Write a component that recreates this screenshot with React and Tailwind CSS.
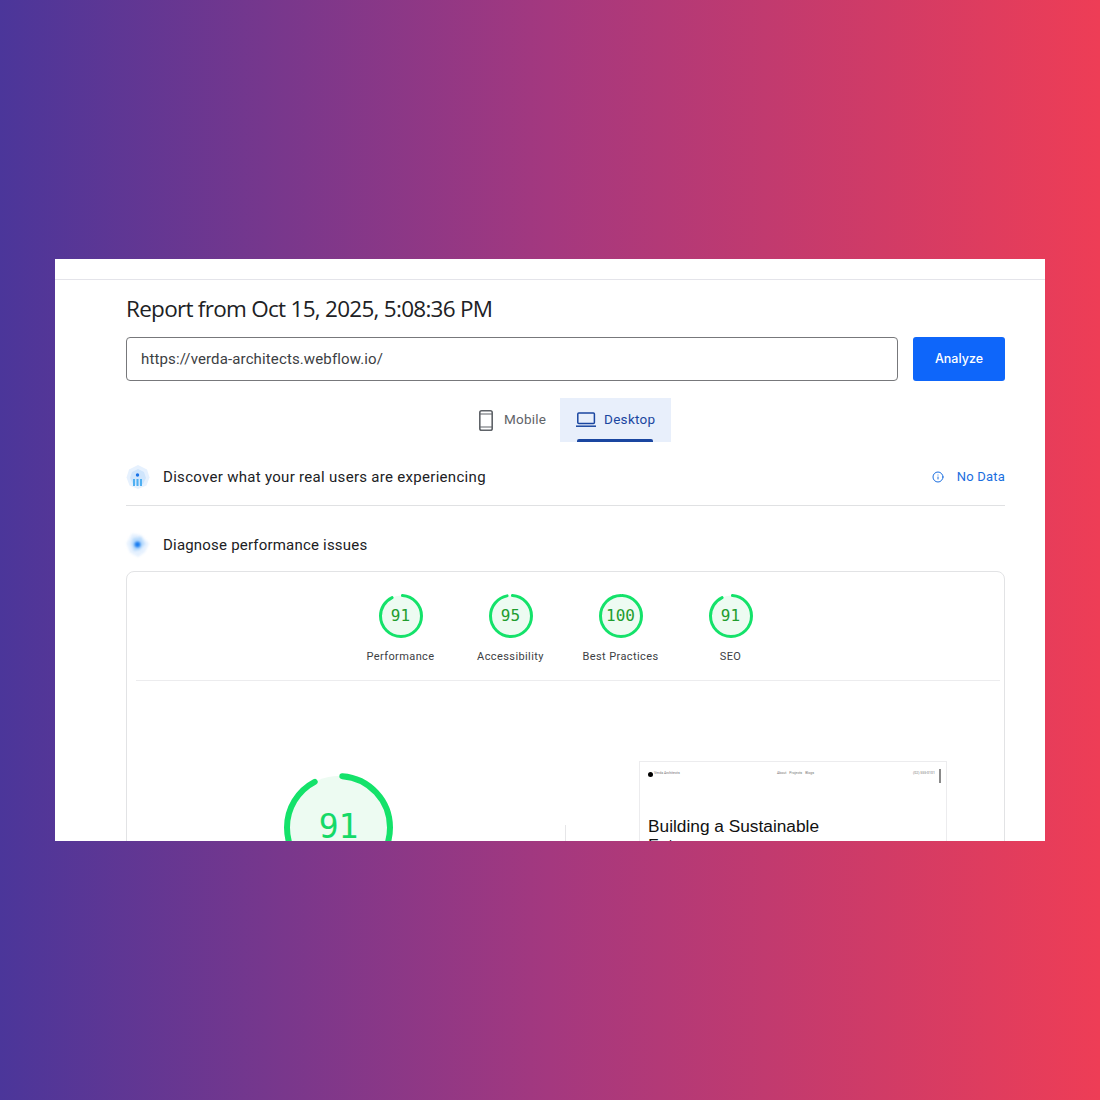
import { Info } from "lucide-react";

const scores = [
  { value: 91, label: "Performance" },
  { value: 95, label: "Accessibility" },
  { value: 100, label: "Best Practices" },
  { value: 91, label: "SEO" },
];

function Gauge({ value, size, stroke, className }) {
  const r = (size - stroke) / 2;
  const c = 2 * Math.PI * r;
  return (
    <div className="relative shrink-0" style={{ width: size, height: size }}>
      <svg width={size} height={size} className="-rotate-90">
        <circle cx={size / 2} cy={size / 2} r={r} fill="#edfbf2" stroke="none" />
        <circle
          cx={size / 2}
          cy={size / 2}
          r={r}
          fill="none"
          stroke="#14e26a"
          strokeWidth={stroke}
          strokeLinecap="round"
          strokeDasharray={`${(c * value) / 100} ${c}`}
          strokeDashoffset={-c * 0.012}
        />
      </svg>
      <div className={`absolute inset-0 flex items-center justify-center font-['DejaVu_Sans_Mono',monospace] ${className}`}>
        {value}
      </div>
    </div>
  );
}

function PhoneIcon() {
  return (
    <svg width="14" height="21" viewBox="0 0 14 21" fill="none" stroke="#5f6368" strokeWidth="1.6">
      <rect x="0.8" y="0.8" width="12.4" height="19.4" rx="1.8" />
      <path d="M1 4h12M1 17h12" strokeWidth="1.2" />
    </svg>
  );
}

function LaptopIcon() {
  return (
    <svg width="20" height="16" viewBox="0 0 20 16" fill="none" stroke="#1a46a0" strokeWidth="1.5">
      <rect x="1.8" y="1" width="16.6" height="10.6" rx="1" />
      <path d="M0 14.2h20" />
    </svg>
  );
}

function CruxIcon() {
  return (
    <svg width="24" height="26" viewBox="0 0 24 26" className="blur-[0.7px]">
      <path d="M12 1l9 4.500 2.500 8-3 8-8.500 3.500-8.500-3.500-3-8 2.500-8z" fill="#e6f1fe" />
      <path d="M12 5l6 3 2 6-3 6-5 2-5-2-3-6 2-6z" fill="#cfe5fc" />
      <circle cx="11.500" cy="11" r="1.700" fill="#1a73e8" />
      <path d="M8 15v7M11.500 15v7M15 15v7" stroke="#4fb0f2" strokeWidth="2" />
    </svg>
  );
}

function DiagnoseIcon() {
  return (
    <svg width="24" height="26" viewBox="0 0 24 26" className="blur-[1px]">
      <path d="M6 1.500l9 1.500 8 8.500-4 8.500-7 5-8-4.500-3.500-9z" fill="#e6f1fe" />
      <path d="M7 6l8-1 4 7-5 6-6 1-3-7z" fill="#b9dbfc" />
      <circle cx="11.500" cy="12.500" r="3" fill="#1a7df0" />
    </svg>
  );
}

export default function App() {
  return (
    <div className="h-[1100px] w-full flex items-center bg-linear-to-r/srgb from-[#4b369a] via-[#a4387f] to-[#ee3d56] font-['Roboto',sans-serif]">
      <div className="ml-[55px] w-[990px] h-[582px] bg-white overflow-hidden">
        <div className="h-[21px] border-b border-[#e4e4ea]" />
        <div className="ml-[71px] mr-[40px]">
          <h1 className="mt-[14px] h-[30px] text-[22.500px] leading-[30px] text-[#202124] font-['Open_Sans',sans-serif] tracking-[-0.72px]">
            Report from Oct 15, 2025, 5:08:36 PM
          </h1>
          <div className="mt-[13px] flex gap-[15px]">
            <div className="flex-1 h-[44px] flex items-center pl-[14px] border border-[#77787b] rounded-[4px] text-[15px] text-[#3c4043] tracking-[0.13px]">
              https://verda-architects.webflow.io/
            </div>
            <div className="w-[92px] h-[44px] flex items-center justify-center pt-px rounded-[3px] bg-[#0e66fa] text-white text-[12.500px] font-medium font-['Inter',sans-serif]">
              Analyze
            </div>
          </div>

          <div className="mt-[17px] flex justify-center pl-[2px]">
            <div className="w-[98px] h-[44px] flex items-center gap-[11px] pl-[17px] text-[13.500px] text-[#5f6368] tracking-[0.2px]">
              <PhoneIcon />
              <span className="mb-[2px]">Mobile</span>
            </div>
            <div className="relative w-[111px] h-[44px] flex items-center gap-[8px] pl-[16px] bg-[#e8effb] text-[13.500px] text-[#1a46a0] tracking-[0.3px]">
              <LaptopIcon />
              <span className="mb-[2px]">Desktop</span>
              <div className="absolute left-[17px] bottom-0 w-[76px] h-[3px] rounded-t-[2px] bg-[#1a46a0]" />
            </div>
          </div>

          <div className="mt-[22px] h-[42px] flex items-start border-b border-[#e0e1e3]">
            <CruxIcon />
            <span className="ml-[13px] text-[15px] leading-[26px] text-[#202124] tracking-[0.3px]">
              Discover what your real users are experiencing
            </span>
            <Info size={12} color="#1a6ee0" className="ml-auto mt-[7px]" />
            <span className="ml-[13px] text-[13px] leading-[26px] text-[#1a6ee0] tracking-[0.2px]">No Data</span>
          </div>

          <div className="mt-[26px] h-[27px] flex items-start">
            <DiagnoseIcon />
            <span className="ml-[13px] text-[15px] leading-[26px] text-[#202124] tracking-[0.2px]">
              Diagnose performance issues
            </span>
          </div>

          <div className="mt-[12px] h-[400px] border border-[#e2e3e5] rounded-[8px] pl-[9px] pr-[4px]">
            <div className="h-[109px] border-b border-[#ececee] flex justify-center pt-[22px] pr-[5px]">
              {scores.map((s) => (
                <div key={s.label} className="w-[110px] flex flex-col items-center">
                  <Gauge value={s.value} size={44} stroke={3} className="text-[16px] text-[#1f9d2f]" />
                  <div className="mt-[12px] text-[11px] leading-[14px] text-[#3c4043] tracking-[0.4px] whitespace-nowrap">{s.label}</div>
                </div>
              ))}
            </div>
            <div className="flex">
              <div className="w-[429px] flex justify-center pt-[92px]">
                <div className="ml-[-24px]">
                  <Gauge value={91} size={109} stroke={6} className="pb-[2px] text-[33px] text-[#14d968]" />
                </div>
              </div>
              <div className="w-px h-[40px] mt-[144px] bg-[#e6e6e8]" />
              <div className="ml-[73px] mt-[80px] w-[308px] h-[120px] border border-[#ececee] px-[8px] pt-[9px] relative">
                <div className="flex items-center text-[3.500px] text-[#777] h-[6px]">
                  <span className="w-[5px] h-[5px] rounded-full bg-black mr-[1px]" />
                  <span className="w-[123px]">Verda Architects</span>
                  <span className="w-[136px] flex gap-[3px]"><span>About</span><span>Projects</span><span>Blogs</span></span>
                  <span>(02) 555-0101</span>
                </div>
                <div className="absolute right-[5px] top-[7px] w-[2px] h-[14px] bg-[#8a8a8a]" />
                <div className="mt-[40px] text-[17.300px] leading-[19px] text-[#111] font-['Liberation_Sans',sans-serif]">
                  Building a Sustainable
                  <br />
                  Future
                </div>
              </div>
            </div>
          </div>
        </div>
      </div>
    </div>
  );
}
